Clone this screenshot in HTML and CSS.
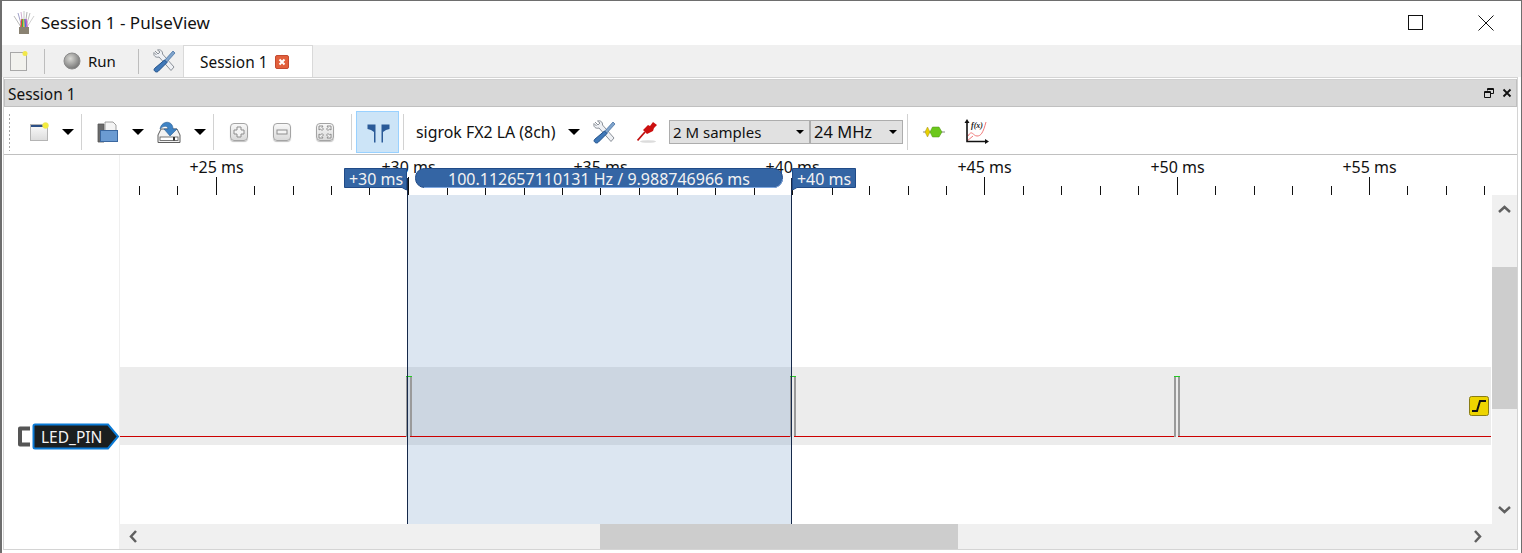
FILE: index.html
```html
<!DOCTYPE html>
<html lang="en-us">
  <head>
    <meta charset="utf-8">
    <title>Session 1 - PulseView</title>
    <link rel="stylesheet" href="styles.css">
  </head>
  <body>
    <div id="window">
      <div id="titlebar">
        <svg class="app-icon" width="24" height="26" viewBox="0 0 24 26">
          <rect x="7" y="17" width="10" height="7" fill="#8a8272"/>
          <g fill="none" stroke-width="1">
            <path d="M9 17 2 6" stroke="#b9b9b9"/>
            <path d="M10 17 6 3" stroke="#a0a0c8"/>
            <path d="M11 17 9 2" stroke="#d0b0d0"/>
            <path d="M12 17V1" stroke="#c8c8c8"/>
            <path d="M13 17 15 2" stroke="#b0b0b0"/>
            <path d="M14 17 18 3" stroke="#c0c0c0"/>
            <path d="M15 17 22 6" stroke="#d0d0d0"/>
            <path d="M9 17 10 9" stroke="#e04040" stroke-width="1.5"/>
            <path d="M10.500 17 11 9" stroke="#40b040" stroke-width="1.5"/>
            <path d="M12 17V9" stroke="#e0c030" stroke-width="1.5"/>
            <path d="M13.500 17 13 9" stroke="#4070e0" stroke-width="1.5"/>
            <path d="M15 17 14 9" stroke="#c060c0" stroke-width="1.5"/>
          </g>
        </svg>
        <span class="app-title">Session 1 - PulseView</span>
        <div class="win-buttons">
          <svg width="16" height="16" viewBox="0 0 16 16"><rect x="0.500" y="0.500" width="14" height="14" class="win-glyph"/></svg>
          <svg width="16" height="16" viewBox="0 0 16 16"><path d="M0.500 0.500 15.500 15.500M15.500 0.500 0.500 15.500" class="win-glyph"/></svg>
        </div>
      </div>

      <div id="tabbar">
        <svg class="tb-new" width="20" height="22" viewBox="0 0 20 22">
          <rect x="1.500" y="2.500" width="16" height="18" fill="#f2f2ee" stroke="#a8a8a8"/>
          <circle cx="16" cy="3.500" r="2.500" fill="#f2e84a"/>
        </svg>
        <span class="tab-sep sep-a"></span>
        <svg class="tb-run" width="18" height="18" viewBox="0 0 18 18">
          <defs>
            <radialGradient id="ball" cx="40%" cy="35%" r="70%"><stop offset="0" stop-color="#d8d8d4"/><stop offset="1" stop-color="#707070"/></radialGradient>
          </defs>
          <circle cx="9" cy="9" r="8" fill="url(#ball)" stroke="#8a8a8a"/>
        </svg>
        <span class="run-label">Run</span>
        <span class="tab-sep sep-b"></span>
        <svg class="tb-tools" width="24" height="24" viewBox="0 0 24 24">
          <use href="#tools"/>
        </svg>
        <div class="tab">
          <span class="tab-text">Session 1</span>
          <span class="tab-close">
            <svg width="14" height="14" viewBox="0 0 14 14">
              <rect x="0.500" y="0.500" width="13" height="13" rx="1.500" fill="#e2603c" stroke="#c44a30"/>
              <path d="M4.500 4.500 9.500 9.500M9.500 4.500 4.500 9.500" stroke="#fff" stroke-width="2"/>
            </svg>
          </span>
        </div>
      </div>

      <div id="dock">
        <div class="dock-title">
          <span class="dock-text">Session 1</span>
          <div class="dock-buttons">
            <svg width="10" height="10" viewBox="0 0 10 10"><path d="M3.500 2.500V.500H9.500V5.500H7M.500 3.500H6.500V9.500H.500ZM.500 4.500H6.500M3.500 1.500H9.500" fill="none" stroke="#111"/></svg>
            <svg width="10" height="10" viewBox="0 0 10 10"><path d="M1.500 1.500 8.500 8.500M8.500 1.500 1.500 8.500" fill="none" stroke="#111" stroke-width="1.800"/></svg>
          </div>
        </div>

        <div class="toolbar">
          <span class="grip"></span>
          <svg class="i-new" width="20" height="20" viewBox="0 0 20 20">
            <defs>
              <linearGradient id="sheet" x1="0" y1="0" x2="0" y2="1"><stop offset="0" stop-color="#fbfbfb"/><stop offset="1" stop-color="#dcdcdc"/></linearGradient>
            </defs>
            <rect x="1.500" y="2.500" width="17" height="16" fill="url(#sheet)" stroke="#b4b4b4"/>
            <rect x="2" y="3" width="16" height="2" fill="#2c4f86"/>
            <circle cx="16.500" cy="3.500" r="3" fill="#f3ec3c" stroke="#e8e070" stroke-width="0.500"/>
          </svg>
          <svg class="drop d-new" width="12" height="6" viewBox="0 0 12 6"><path d="M0 0H12L6 6Z"/></svg>
          <span class="sep s1"></span>
          <svg class="i-open" width="22" height="22" viewBox="0 0 22 22">
            <path d="M1 3H7V21H1Z" fill="#6a6a6a" stroke="#555" stroke-width="0.800"/>
            <path d="M8 1H16L19 4V10H8Z" fill="#f4f4f4" stroke="#888" stroke-width="0.800"/>
            <rect x="3.500" y="9.500" width="17" height="11" fill="#6b9bd2" stroke="#3a679f"/>
          </svg>
          <svg class="drop d-open" width="12" height="6" viewBox="0 0 12 6"><path d="M0 0H12L6 6Z"/></svg>
          <svg class="i-save" width="24" height="24" viewBox="0 0 24 24">
            <path d="M4 9 1 15V22.500H23V15L20 9Z" fill="#f2f2f2" stroke="#5d5d5d"/>
            <rect x="3" y="17" width="18" height="3.500" fill="#fff" stroke="#555" stroke-width="0.800"/>
            <rect x="16" y="17" width="2" height="3.500" fill="#333"/>
            <path d="M3 9C4 2 12 0 15 5 16 7 16 8 16 9H20L13 16 7 9H11C11 6 7 5 3 9Z" fill="#3f83c4" stroke="#2b5f93" stroke-width="0.600"/>
          </svg>
          <svg class="drop d-save" width="12" height="6" viewBox="0 0 12 6"><path d="M0 0H12L6 6Z"/></svg>
          <span class="sep s2"></span>
          <span class="key k1">
            <svg width="12" height="12" viewBox="0 0 12 12"><path d="M4 1H8V4H11V8H8V11H4V8H1V4H4Z" class="key-glyph"/></svg>
          </span>
          <span class="key k2">
            <svg width="12" height="12" viewBox="0 0 12 12"><rect x="1" y="4" width="10" height="4" class="key-glyph"/></svg>
          </span>
          <span class="key k3">
            <svg width="14" height="14" viewBox="0 0 14 14"><path d="M1 5V1H5L4 2.500 5.500 4 4 5.500 2.500 4ZM9 1H13V5L11.500 4 10 5.500 8.500 4 10 2.500ZM13 9V13H9L10 11.500 8.500 10 10 8.500 11.500 10ZM5 13H1V9L2.500 10 4 8.500 5.500 10 4 11.500Z" class="key-glyph"/></svg>
          </span>
          <span class="sep s3"></span>
          <span class="cursor-btn">
            <svg width="24" height="24" viewBox="0 0 24 24">
              <path d="M1.500 4.500H9.500V22.500H8V12L5 10 1.500 9ZM23.500 4.500H15.500V22.500H17V12L20 10 23.500 9Z" fill="#2a5a98"/>
            </svg>
          </span>
          <span class="sep s4"></span>
          <span class="device">sigrok FX2 LA (8ch)</span>
          <svg class="drop d-dev" width="12" height="6" viewBox="0 0 12 6"><path d="M0 0H12L6 6Z"/></svg>
          <svg class="i-tools" width="24" height="24" viewBox="0 0 24 24">
            <defs>
              <g id="tools">
                <path d="M3 2 6 5 8 3 5.500 1C8 0 11 2 10.500 5L22 18 19 21.500 7 8C4 9 1 7 2 3.500L4.500 6" fill="#eef0f4" stroke="#8a9098" stroke-width="1"/>
                <path d="M21 2 23 4 14 14 12 12Z" fill="#7fa4cc" stroke="#4a74a4" stroke-width="0.800"/>
                <path d="M12.500 11 15 13.500 6 22.500C4 24 1 21.500 2.500 19.500Z" fill="#3f78b8" stroke="#1f4f88" stroke-width="1"/>
              </g>
            </defs>
            <use href="#tools"/>
          </svg>
          <svg class="i-probe" width="22" height="22" viewBox="0 0 22 22">
            <ellipse cx="11" cy="20.500" rx="8" ry="1.300" fill="#dcdcdc"/>
            <path d="M0.500 19.500 8 11" stroke="#c01010" stroke-width="1.800" fill="none"/>
            <path d="M6 9 11 4 13 5 16 1 20 4 17 7 16 10 10 13Z" fill="#cc1010"/>
          </svg>
          <div class="combo c-samples"><span>2 M samples</span><svg width="8" height="4" viewBox="0 0 8 4"><path d="M0 0H8L4 4Z"/></svg></div>
          <div class="combo c-rate"><span>24 MHz</span><svg width="8" height="4" viewBox="0 0 8 4"><path d="M0 0H8L4 4Z"/></svg></div>
          <span class="sep s5"></span>
          <svg class="i-decoder" width="22" height="12" viewBox="0 0 22 12">
            <path d="M0 6H22" stroke="#888"/>
            <path d="M2 6 4.500 1 7 6 4.500 11Z" fill="#e8d000" stroke="#a09020" stroke-width="0.500"/>
            <path d="M7 6 9.500 1H16L19 6 16 11H9.500Z" fill="#6cc81c" stroke="#4c9010" stroke-width="0.500"/>
          </svg>
          <svg class="i-math" width="26" height="26" viewBox="0 0 26 26">
            <path d="M4 17C8 10 9 17 13 17S19 14 22 3" fill="none" stroke="#f07878"/>
            <path d="M3 22 9 17" stroke="#f07878" fill="none"/>
            <text x="7" y="9" class="math-label">f(x)</text>
            <path d="M3 3V22.500H22" fill="none" stroke="#111" stroke-width="1.600"/>
            <path d="M3 0 .500 4H5.500ZM25 22.500 21 20V25Z" fill="#111"/>
          </svg>
        </div>

        <div class="view">
          <div class="view-main">
            <svg class="scene" width="1488" height="369" viewBox="4 155 1488 369">
              <!-- ruler -->
              <path class="tick" d="M139.500 186V195M177.500 186V195M254.500 186V195M293.500 186V195M331.500 186V195M369.500 186V195M447.500 186V195M485.500 186V195M524.500 186V195M562.500 186V195M639.500 186V195M677.500 186V195M715.500 186V195M754.500 186V195M832.500 186V195M869.500 186V195M908.500 186V195M946.500 186V195M1023.500 186V195M1061.500 186V195M1100.500 186V195M1138.500 186V195M1215.500 186V195M1254.500 186V195M1292.500 186V195M1331.500 186V195M1407.500 186V195M1446.500 186V195M1484.500 186V195"/>
              <path class="tick" d="M216.500 177V195M408.500 177V195M600.500 177V195M792.500 177V195M984.500 177V195M1177.500 177V195M1369.500 177V195"/>
              <text class="ruler-label" x="216.500" y="173">+25 ms</text>
              <text class="ruler-label" x="408.500" y="173">+30 ms</text>
              <text class="ruler-label" x="600.500" y="173">+35 ms</text>
              <text class="ruler-label" x="792.500" y="173">+40 ms</text>
              <text class="ruler-label" x="984.500" y="173">+45 ms</text>
              <text class="ruler-label" x="1177.500" y="173">+50 ms</text>
              <text class="ruler-label" x="1369.500" y="173">+55 ms</text>

              <!-- trace -->
              <path class="header-edge" d="M119.500 155V524"/>
              <rect class="band" x="120" y="367" width="1371" height="78"/>
              <rect class="selection" x="408" y="195" width="384" height="329"/>
              <path class="pulse-edge" d="M407 377V437M411 377V437M791 377V437M795 377V437M1175 377V437M1179 377V437"/>
              <path class="pulse-top" d="M406 376.500H412M790 376.500H796M1174 376.500H1180"/>
              <path class="signal" d="M120 436.500H406M410 436.500H790M794 436.500H1174M1178 436.500H1491"/>
              <path class="cursor-line" d="M407.500 178V524M791.500 178V524"/>

              <!-- markers -->
              <path class="marker" d="M344.500 168.500H406.500V190L402 187.500H344.500Z"/>
              <text class="marker-text" x="376" y="184.500">+30 ms</text>
              <path class="marker" d="M792.500 168.500H855.500V187.500H797L792.500 190Z"/>
              <text class="marker-text" x="824" y="184.500">+40 ms</text>
              <rect class="marker-pill" x="415.500" y="168.500" width="367" height="19" rx="9"/>
              <path class="marker-light" d="M424 187.500H774C778 187.500 782 184 782.500 179"/>
              <text class="marker-text" x="599" y="184.500">100.112657110131 Hz / 9.988746966 ms</text>

              <!-- channel label -->
              <path class="conn" d="M30 428.500H20V444.500H30"/>
              <path class="chan" d="M35 424.500H108L118 436.500 108 448.500H35Q33.500 448.500 33.500 447V426Q33.500 424.500 35 424.500Z"/>
              <text class="chan-text" x="41" y="443">LED_PIN</text>

              <!-- trigger -->
              <rect class="trig" x="1469.500" y="396.500" width="19" height="19" rx="2"/>
              <path class="trig-glyph" d="M1472 411H1477L1480 401H1486"/>
            </svg>
            <div class="vscroll">
              <svg class="sb-btn" width="25" height="28" viewBox="0 0 25 28"><path d="M7 17 12.500 12 18 17" class="chev"/></svg>
              <div class="v-track"><div class="v-thumb"></div></div>
              <svg class="sb-btn" width="25" height="28" viewBox="0 0 25 28"><path d="M7 11 12.500 16 18 11" class="chev"/></svg>
            </div>
          </div>
          <div class="hscroll">
            <svg class="sb-btn" width="28" height="25" viewBox="0 0 28 25"><path d="M17 7 12 12.500 17 18" class="chev"/></svg>
            <div class="h-track"><div class="h-thumb"></div></div>
            <svg class="sb-btn" width="28" height="25" viewBox="0 0 28 25"><path d="M11 7 16 12.500 11 18" class="chev"/></svg>
            <span class="corner"></span>
          </div>
        </div>
      </div>
    </div>
  </body>
</html>
```

FILE: styles.css
```css
html, body {
  margin: 0;
  padding: 0;
  background-color: #fff;
}
body {
  font-family: "Noto Sans", "Open Sans", sans-serif;
  font-size: 15.4px;
  color: #111;
  overflow: hidden;
}
svg {
  display: block;
  flex: none;
}
#window {
  width: 1522px;
  height: 553px;
  box-sizing: border-box;
  border: 1px solid #6e6e6e;
  border-left-width: 2px;
  border-bottom: none;
  display: flex;
  flex-direction: column;
}
#titlebar {
  height: 44px;
  flex: none;
  display: flex;
  align-items: center;
  background-color: #fff;
}
.app-icon {
  margin-left: 10px;
}
.app-title {
  margin-left: 5px;
  padding-bottom: 2px;
  font-size: 17px;
}
.win-buttons {
  margin-left: auto;
  margin-right: 27px;
  display: flex;
  gap: 54px;
}
.win-glyph {
  fill: none;
  stroke: #111;
}
#tabbar {
  height: 32px;
  flex: none;
  display: flex;
  align-items: center;
  background-color: #f0f0f0;
}
.tb-new {
  margin-left: 7px;
}
.tab-sep {
  width: 1px;
  height: 25px;
  background-color: #bdbdbd;
}
.sep-a {
  margin-left: 15px;
}
.tb-run {
  margin-left: 18px;
}
.run-label {
  margin-left: 7px;
  width: 28px;
  font-size: 15px;
}
.sep-b {
  margin-left: 22px;
}
.tb-tools {
  margin-left: 13px;
}
.tab {
  margin-left: 7px;
  height: 32px;
  width: 130px;
  box-sizing: border-box;
  align-self: flex-end;
  background-color: #fff;
  border: 1px solid #d9d9d9;
  border-bottom: none;
  display: flex;
  align-items: center;
  padding-left: 16px;
  gap: 8px;
}
.tab-text {
  padding-top: 2px;
}
#dock {
  flex: 1;
  min-height: 0;
  margin: 0 3px 3px 1px;
  border: 1px solid #d4d4d4;
  display: flex;
  flex-direction: column;
}
.dock-title {
  height: 28px;
  flex: none;
  margin-top: 1px;
  box-sizing: border-box;
  background-color: #d8d8d8;
  border: 1px solid #c0c0c0;
  border-top: 1px solid #cfcfcf;
  display: flex;
  align-items: center;
  padding: 0 4px 0 3px;
}
.dock-text {
  padding-top: 2px;
}
.dock-buttons {
  margin-left: auto;
  display: flex;
  gap: 8px;
}
.toolbar {
  height: 48px;
  flex: none;
  box-sizing: border-box;
  padding-top: 2px;
  border-bottom: 1px solid #c0c0c0;
  display: flex;
  align-items: center;
  font-size: 15.9px;
}
.grip {
  width: 2px;
  height: 38px;
  margin-left: 4px;
  background-image: radial-gradient(circle, #a8a8a8 1px, transparent 1px);
  background-size: 3px 4px;
}
.sep {
  width: 1px;
  height: 36px;
  background-color: #d2d2d2;
}
.drop {
  fill: #000;
}
.i-new { margin-left: 19px; }
.d-new { margin-left: 13px; }
.s1 { margin-left: 7px; }
.i-open { margin-left: 15px; }
.d-open { margin-left: 13px; }
.i-save { margin-left: 13px; }
.d-save { margin-left: 13px; }
.s2 { margin-left: 7px; }
.key {
  width: 18px;
  height: 18px;
  box-sizing: border-box;
  border: 1px solid #a4a4a4;
  border-radius: 4px;
  background: linear-gradient(#f8f8f8, #dadada);
  box-shadow: 0 1px 1px #c0c0c0;
  display: flex;
  align-items: center;
  justify-content: center;
}
.k1 { margin-left: 16px; }
.k2 { margin-left: 25px; }
.k3 { margin-left: 25px; }
.key-glyph {
  fill: #f4f4f4;
  stroke: #8e8e8e;
}
.s3 { margin-left: 17px; }
.cursor-btn {
  margin-left: 4px;
  width: 43px;
  height: 42px;
  box-sizing: border-box;
  background-color: #cce4f7;
  border: 1px solid #99d1ff;
  display: flex;
  align-items: center;
  justify-content: center;
}
.s4 { margin-left: 4px; }
.device {
  margin-left: 12px;
  width: 141px;
  white-space: nowrap;
}
.d-dev { margin-left: 11px; }
.i-tools { margin-left: 12px; }
.i-probe { margin-left: 21px; }
.combo {
  height: 24px;
  box-sizing: border-box;
  background-color: #e1e1e1;
  border: 1px solid #adadad;
  display: flex;
  align-items: center;
  justify-content: space-between;
  padding: 0 5px 0 3px;
  font-size: 15px;
}
.combo svg {
  fill: #000;
}
.c-samples {
  width: 141px;
  margin-left: 10px;
}
.c-rate {
  width: 93px;
  font-size: 16.5px;
}
.s5 { margin-left: 4px; }
.i-decoder { margin-left: 15px; }
.i-math { margin-left: 19px; }
.math-label {
  font-family: "Liberation Serif", serif;
  font-style: italic;
  font-weight: bold;
  font-size: 8px;
  fill: #222;
}
.view {
  flex: 1;
  min-height: 0;
  display: flex;
  flex-direction: column;
}
.view-main {
  flex: none;
  height: 369px;
  display: flex;
}
.scene {
  font-family: "Noto Sans", "Open Sans", sans-serif;
}
.tick {
  stroke: #111;
  fill: none;
  shape-rendering: crispEdges;
}
.ruler-label {
  font-size: 16px;
  fill: #111;
  text-anchor: middle;
}
.header-edge {
  stroke: #efefef;
  shape-rendering: crispEdges;
}
.band {
  fill: #ececec;
}
.selection {
  fill: #316cad;
  fill-opacity: 0.17;
}
.pulse-edge {
  stroke: #9a9a9a;
  stroke-width: 2;
  fill: none;
  shape-rendering: crispEdges;
}
.pulse-top {
  stroke: #22cc22;
  fill: none;
  shape-rendering: crispEdges;
}
.signal {
  stroke: #cc0000;
  fill: none;
  shape-rendering: crispEdges;
}
.cursor-line {
  stroke: #16294a;
  fill: none;
  shape-rendering: crispEdges;
}
.marker {
  fill: #3465a4;
  stroke: #204a87;
}
.marker-pill {
  fill: #3465a4;
  stroke: #204a87;
}
.marker-light {
  fill: none;
  stroke: #7fa8e0;
}
.marker-text {
  font-size: 16px;
  fill: #f2f2f2;
  text-anchor: middle;
}
.conn {
  fill: none;
  stroke: #555;
  stroke-width: 4;
  stroke-linejoin: round;
}
.chan {
  fill: #1b1f20;
  stroke: #0a7ad6;
  stroke-width: 2;
}
.chan-text {
  font-size: 15.5px;
  fill: #f4f4f4;
}
.trig {
  fill: #edd400;
  stroke: #8a7d14;
}
.trig-glyph {
  fill: none;
  stroke: #111;
  stroke-width: 2;
}
.vscroll {
  width: 25px;
  margin-top: 40px;
  background-color: #f0f0f0;
  display: flex;
  flex-direction: column;
}
.v-track {
  flex: 1;
  padding-top: 44px;
}
.v-thumb {
  height: 142px;
  background-color: #cdcdcd;
}
.chev {
  fill: none;
  stroke: #606060;
  stroke-width: 2.5;
}
.hscroll {
  height: 25px;
  flex: none;
  margin-left: 115px;
  background-color: #f0f0f0;
  display: flex;
}
.h-track {
  flex: 1;
  padding-left: 453px;
}
.h-thumb {
  width: 358px;
  height: 100%;
  background-color: #cdcdcd;
}
.corner {
  width: 25px;
}
```
